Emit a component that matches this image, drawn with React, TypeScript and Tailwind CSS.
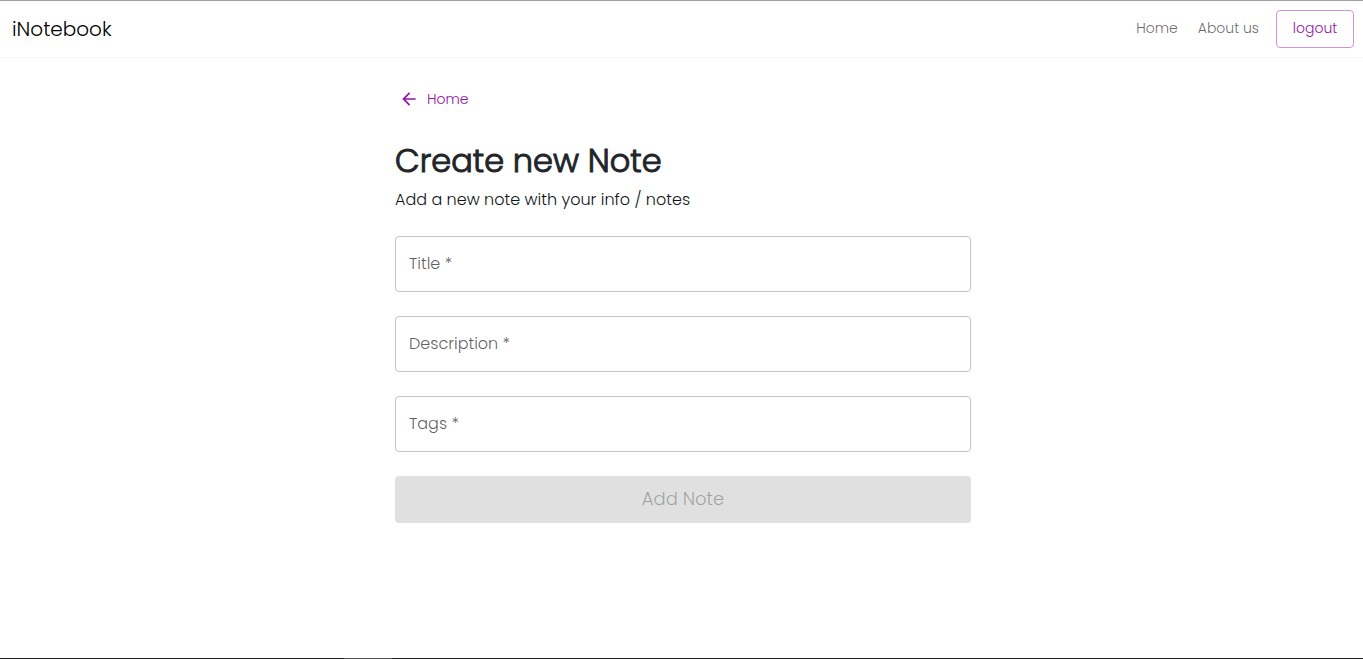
import { useState } from "react";
import type { FormEvent } from "react";

type FieldName = "title" | "description" | "tags";

const fields: { name: FieldName; label: string }[] = [
  { name: "title", label: "Title" },
  { name: "description", label: "Description" },
  { name: "tags", label: "Tags" },
];

function Navbar() {
  return (
    <header className="flex h-[58px] items-center justify-between border-t border-b border-t-[#a39fa1] border-b-[#f5f5f5] pr-[9px] pl-3">
      <a href="#home" className="text-xl leading-7 text-black">
        iNotebook
      </a>
      <nav className="flex items-center">
        <a href="#home" className="mr-5 pb-0.5 text-sm leading-6 text-black/60">
          Home
        </a>
        <a href="#about" className="mr-[17px] pb-0.5 text-sm leading-6 text-black/60">
          About us
        </a>
        <button
          type="button"
          className="h-[38px] w-[78px] rounded border border-[#ce93d8] pb-0.5 text-sm text-[#9014a6]"
        >
          logout
        </button>
      </nav>
    </header>
  );
}

function Field({
  name,
  label,
  value,
  onChange,
}: {
  name: FieldName;
  label: string;
  value: string;
  onChange: (value: string) => void;
}) {
  return (
    <div className="grid items-center">
      <input
        id={name}
        name={name}
        required
        value={value}
        placeholder=" "
        onChange={(e) => onChange(e.target.value)}
        className="peer col-start-1 row-start-1 h-14 w-full rounded border border-[#c4c4c4] bg-white px-[13px] text-base text-[#212529] outline-none focus:border-[#9c27b0]"
      />
      <label
        htmlFor={name}
        className="pointer-events-none invisible col-start-1 row-start-1 px-3.5 text-base text-black/65 peer-placeholder-shown:visible"
      >
        {label} *
      </label>
    </div>
  );
}

export default function App() {
  const [note, setNote] = useState({ title: "", description: "", tags: "" });
  const complete = Boolean(note.title && note.description && note.tags);
  const submit = (e: FormEvent) => e.preventDefault();

  return (
    <div className="flex min-h-screen flex-col bg-white font-['Poppins','Inter',sans-serif] font-light text-[#212529]">
      <Navbar />
      <main className="grow pl-[3px]">
        <div className="mx-auto flex max-w-[576px] flex-col pt-[29px]">
          <a
            href="#home"
            className="ml-1 flex h-6 items-center gap-2 self-start text-sm text-[#9014a6]"
          >
            <svg viewBox="0 0 24 24" className="size-5" fill="currentColor" aria-hidden="true">
              <path d="M20 11H7.83l5.59-5.59L12 4l-8 8 8 8 1.41-1.41L7.83 13H20v-2z" />
            </svg>
            Home
          </a>
          <h1 className="mt-[26px] text-[32px] leading-[48px] font-light [-webkit-text-stroke:1px_#212529]">
            Create new Note
          </h1>
          <p className="mt-[3px] text-base leading-6 text-[#111418]">
            Add a new note with your info / notes
          </p>
          <form onSubmit={submit} className="mt-6 flex flex-col gap-6">
            {fields.map((field) => (
              <Field
                key={field.name}
                name={field.name}
                label={field.label}
                value={note[field.name]}
                onChange={(value) => setNote({ ...note, [field.name]: value })}
              />
            ))}
            <button
              type="submit"
              disabled={!complete}
              className="h-[47px] rounded bg-[#9c27b0] pb-0.5 text-lg text-white disabled:bg-[#e0e0e0] disabled:text-black/30"
            >
              Add Note
            </button>
          </form>
        </div>
      </main>
      <footer className="flex h-px bg-[#1f1f1f]">
        <div className="ml-[344px] w-12 bg-[#555555]" />
      </footer>
    </div>
  );
}
